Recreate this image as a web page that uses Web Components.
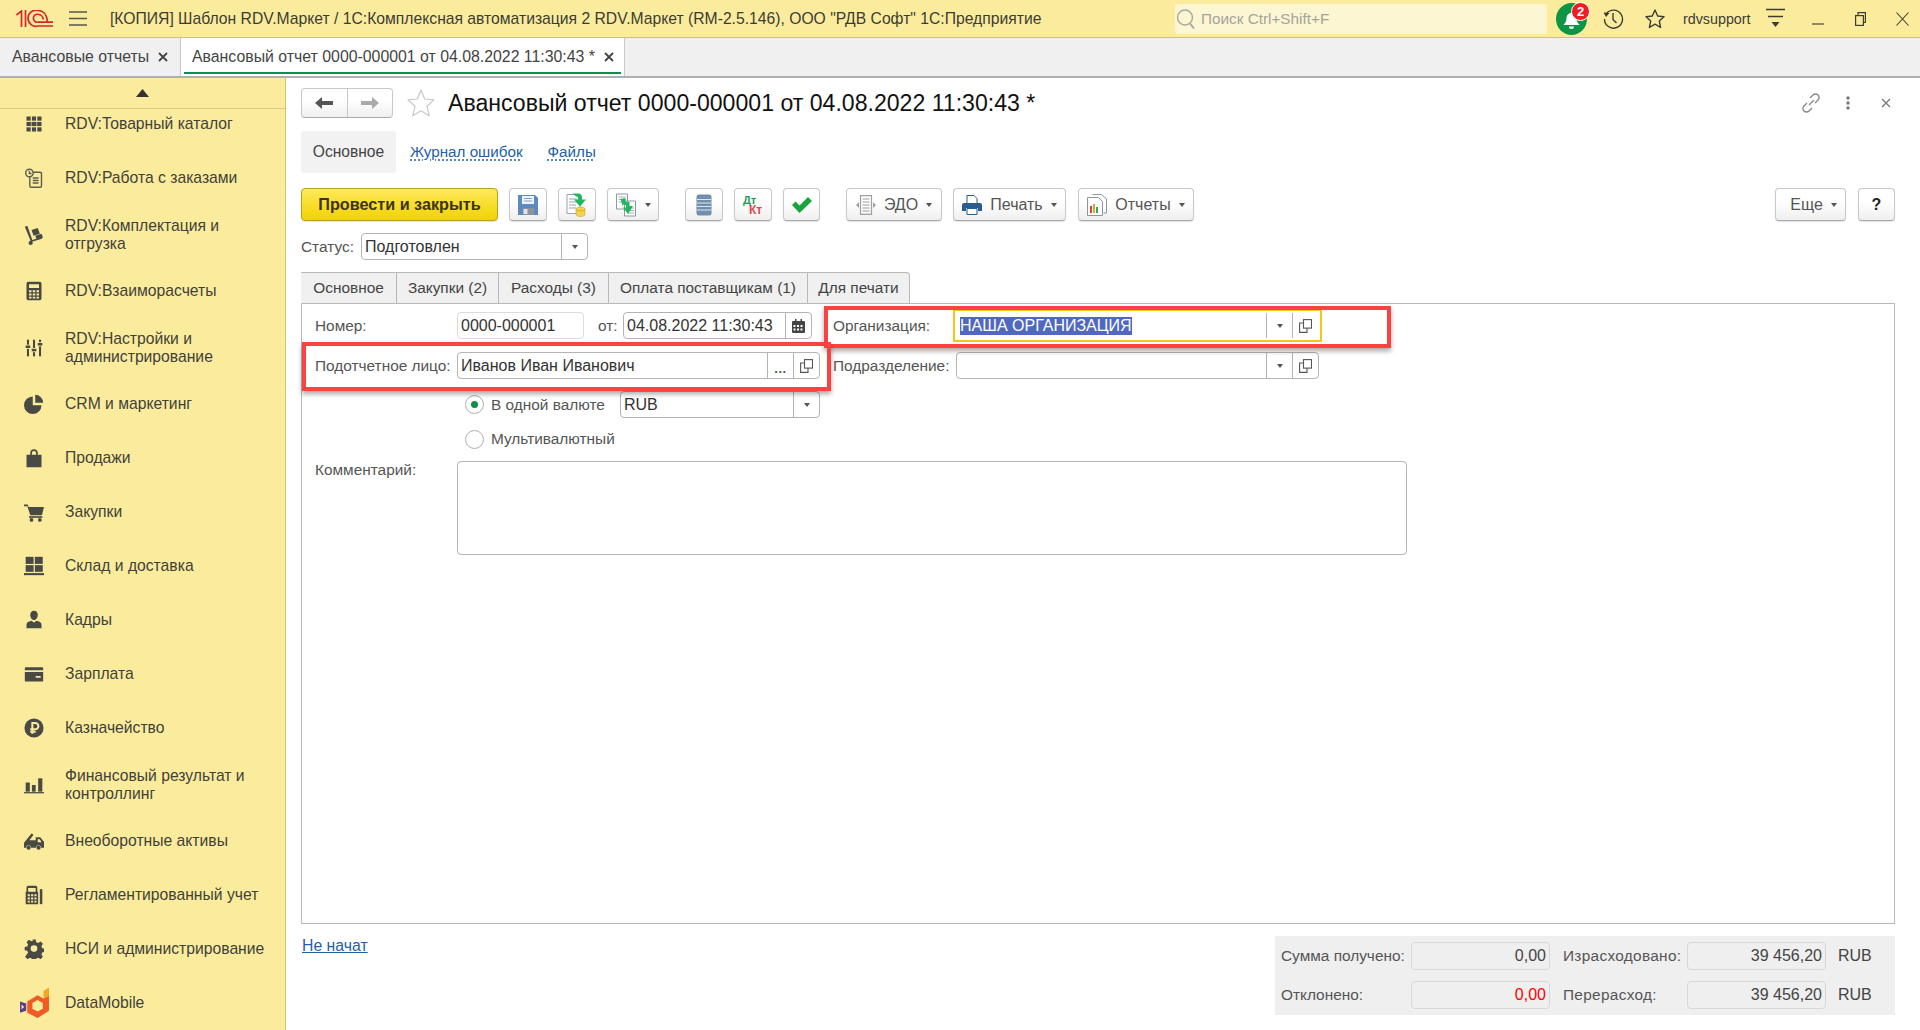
<!DOCTYPE html>
<html lang="ru">
<head>
<meta charset="utf-8">
<title>Авансовый отчет</title>
<style>
  html, body { margin: 0; height: 100%; overflow: hidden; background: #fff; }
  body { font: 15.4px "Liberation Sans", Arial, sans-serif; color: #333; }
</style>
</head>
<body>
<app-shell>
  <top-bar slot="top"></top-bar>
  <open-tabs slot="tabs"></open-tabs>
  <side-panel slot="side">
    <side-item icon="catalog">RDV:Товарный каталог</side-item>
    <side-item icon="orders">RDV:Работа с заказами</side-item>
    <side-item icon="cart2">RDV:Комплектация и отгрузка</side-item>
    <side-item icon="calc">RDV:Взаиморасчеты</side-item>
    <side-item icon="sliders">RDV:Настройки и администрирование</side-item>
    <side-item icon="pie">CRM и маркетинг</side-item>
    <side-item icon="bag">Продажи</side-item>
    <side-item icon="cart">Закупки</side-item>
    <side-item icon="stock">Склад и доставка</side-item>
    <side-item icon="person">Кадры</side-item>
    <side-item icon="card">Зарплата</side-item>
    <side-item icon="ruble">Казначейство</side-item>
    <side-item icon="bars">Финансовый результат и контроллинг</side-item>
    <side-item icon="truck">Внеоборотные активы</side-item>
    <side-item icon="till">Регламентированный учет</side-item>
    <side-item icon="gear">НСИ и администрирование</side-item>
    <side-item icon="dm">DataMobile</side-item>
  </side-panel>
  <form-page slot="main"></form-page>
</app-shell>
<red-box style="left:824px;top:306px;width:567px;height:42px"></red-box>
<red-box style="left:302px;top:342px;width:529px;height:49px"></red-box>

<script>
const svg = (w, h, vb, body) =>
  `<svg xmlns="http://www.w3.org/2000/svg" width="${w}" height="${h}" viewBox="${vb}" style="display:block;flex:none">${body}</svg>`;

// sidebar icons, all on a 24 box
const sideIcons = {
  catalog: `<g fill="#4a4a44"><rect x="3" y="3" width="5" height="5"/><rect x="9.500" y="3" width="5" height="5"/><rect x="16" y="3" width="5" height="5"/><rect x="3" y="9.500" width="18" height="5"/><rect x="3" y="16" width="5" height="5"/><rect x="9.500" y="16" width="5" height="5"/><rect x="16" y="16" width="5" height="5"/></g><path d="M8.700 9v6M15.300 9v6" stroke="#fbec9d" stroke-width=".8"/>`,
  orders: `<g fill="none" stroke="#5d5d50" stroke-width="1.700"><rect x="7" y="5" width="14" height="18" rx="1.500"/><circle cx="6.500" cy="6" r="4.500" fill="#fbec9d"/><path d="M6.500 3.500V6.500h2.500M10.500 12h7M10.500 15h7M10.500 18h7"/></g>`,
  cart2: `<g fill="#4a4a44"><path d="M1 2l3-1 6 17 11-3.500 .5 2-13 4z"/><circle cx="8" cy="21.500" r="2.500"/><path d="M9 6l7.500-2.500 2.500 7-7.500 2.500zM13.500 13l7.500-2.500 1.800 4.500-7.500 2.500z"/></g>`,
  calc: `<path fill="#4a4a44" fill-rule="evenodd" d="M5 1h14a2 2 0 012 2v18a2 2 0 01-2 2H5a2 2 0 01-2-2V3a2 2 0 012-2zm1 3v4.500h12V4zm0 7v2.500h3V11zm4.500 0v2.500h3V11zm4.500 0v2.500h3V11zM6 15v2.500h3V15zm4.500 0v2.500h3V15zm4.500 0v2.500h3V15zM6 19v2h3v-2zm4.500 0v2h3v-2zm4.500 0v2h3v-2z"/>`,
  sliders: `<g fill="#4a4a44"><rect x="3.500" y="2" width="2.500" height="6"/><rect x="2" y="9" width="5.500" height="3"/><rect x="3.500" y="13" width="2.500" height="9"/><rect x="10.750" y="2" width="2.500" height="10"/><rect x="9.250" y="13" width="5.500" height="3"/><rect x="10.750" y="17" width="2.500" height="5"/><rect x="18" y="2" width="2.500" height="3"/><rect x="16.500" y="6" width="5.500" height="3"/><rect x="18" y="10" width="2.500" height="12"/></g>`,
  pie: `<path fill="#4a4a44" d="M10.500 3v10.500H21A10.500 10.500 0 1110.500 3zM13.500 1A9.500 9.500 0 0123 10.500h-9.500z"/>`,
  bag: `<path fill="#4a4a44" d="M3 8h4.500V6a4.500 4.500 0 019 0v2H21v15H3zm6.500 0h5V6a2.500 2.500 0 00-5 0z"/>`,
  cart: `<g fill="#4a4a44"><path d="M0 3h4.500l1 3H24l-2.500 10H7.500L4 5H0z"/><rect x="6" y="17" width="16" height="2"/><circle cx="9" cy="21.500" r="2.300"/><circle cx="19" cy="21.500" r="2.300"/></g>`,
  stock: `<g fill="#4a4a44"><rect x="2" y="1" width="9.500" height="8.500"/><rect x="13" y="1" width="9.500" height="8.500"/><rect x="2" y="11" width="9.500" height="8"/><rect x="13" y="11" width="9.500" height="8"/><rect x="0" y="20.500" width="24" height="2.500"/></g>`,
  person: `<path fill="#4a4a44" d="M12 1c3 0 4.500 2.300 4.500 5S15 12 12 12 7.500 8.700 7.500 6 9 1 12 1zM9 13l3 2 3-2c3 .500 6 2 6 4.500V22H3v-4.500c0-2.500 3-4 6-4.500z"/>`,
  card: `<path fill="#4a4a44" d="M2 4h20a1 1 0 011 1v2.500H1V5a1 1 0 011-1zM1 9.500h22V20a1 1 0 01-1 1H2a1 1 0 01-1-1zm13 5v2h6v-2z"/>`,
  ruble: `<circle cx="12" cy="12" r="11.500" fill="#4a4a44"/><path fill="none" stroke="#fbec9d" stroke-width="2.400" d="M10 19V6h3.500a3.500 3.500 0 010 7.500H7.500M7.500 16.500H14"/>`,
  bars: `<g fill="#4a4a44"><rect x="2" y="9" width="5" height="11"/><rect x="9.500" y="12" width="4.500" height="8"/><rect x="17" y="4" width="5" height="16"/><rect x="0" y="20.500" width="24" height="1.500"/></g>`,
  truck: `<path fill="#4a4a44" fill-rule="evenodd" d="M0 14L9 3l2.500 1.500-5 6.500H14V7.500h5.500L24 13v7h-3.500a3 3 0 00-6 0H8.500a3 3 0 00-6 0H0zm16.500-4v3.500h4.500L19 10z"/><circle cx="5.500" cy="20" r="2.500" fill="#4a4a44"/><circle cx="17.500" cy="20" r="2.500" fill="#4a4a44"/>`,
  till: `<path fill="#4a4a44" fill-rule="evenodd" d="M5 1h9a2 2 0 012 2v5h1v15H2V8h1V3a2 2 0 012-2zm0 2.500V8h9V3.500zM4.500 11v2.500h2.500V11zm4 0v2.500H11V11zm4 0v2.500H15V11zM4.500 15v2.500h2.500V15zm4 0v2.500H11V15zm4 0v2.500H15V15zM4.500 19v2h2.500v-2zm4 0v2H11v-2zm4 0v2H15v-2z"/><rect x="19" y="5" width="3" height="18" fill="#4a4a44"/>`,
  gear: `<path fill="#4a4a44" fill-rule="evenodd" d="M10 1h4l.7 3.300 2.300 1 2.900-1.800 2.800 2.800-1.800 2.900 1 2.300 3.100.5v4l-3.100.7-1 2.300 1.800 2.900-2.800 2.800-2.900-1.800-2.300 1-.7 3.100h-4l-.7-3.100-2.300-1-2.900 1.800-2.800-2.800L4.900 17l-1-2.300L.8 14v-4l3.100-.5 1-2.300-1.800-2.900 2.800-2.800 2.900 1.800 2.300-1zM12 8a4 4 0 100 8 4 4 0 000-8z" transform="translate(0 -.500)"/>`,
  dm: `<path fill="#ef5a25" d="M28 0v22l-11 7-10-5V13l10-6 6 3.500V3z"/><path fill="#f5a623" d="M23 3l5-3v8l-5 2.500z"/><path fill="#fbec9d" d="M12 14.500l5-2.800 5 2.800v5.500l-5 2.800-5-2.800z"/><path fill="#5a3f8f" d="M0 13l6 2v7l-6 2z"/><path fill="#fbec9d" d="M1.500 16l2.500 2.300-2.500 2.300z"/>`
};

class AppShell extends HTMLElement {
  constructor() {
    super();
    this.shadowDOM = this.attachShadow({ mode: "open" });
    this.shadowDOM.innerHTML = `
    <style>
      :host { display: flex; flex-direction: column; height: 1030px; overflow: hidden; }
      .body { flex: 1; display: flex; min-height: 0; }
    </style>
    <slot name="top"></slot>
    <slot name="tabs"></slot>
    <div class="body"><slot name="side"></slot><slot name="main"></slot></div>`;
  }
}

class TopBar extends HTMLElement {
  constructor() {
    super();
    this.shadowDOM = this.attachShadow({ mode: "open" });
    this.shadowDOM.innerHTML = `
    <style>
      :host { display: flex; align-items: center; height: 37px; box-sizing: content-box; background: #fbec9d; border-bottom: 1px solid #d3c274; color: #3c3c34; position: relative; }
      .logo { margin-left: 16px; }
      .burger { margin-left: 16px; }
      .title { margin-left: 23px; font-size: 15.7px; white-space: nowrap; width: 1065px; flex: none; }
      .search { width: 372px; height: 30px; background: #fdf6d3; border-radius: 3px; display: flex; align-items: center; gap: 5px; padding-left: 1px; box-sizing: border-box; color: #a5a499; flex: none; font-size: 15.3px; }
      .bell { position: relative; margin-left: 9px; width: 31px; height: 32px; flex: none; }
      .badge { position: absolute; left: 15px; top: -1px; width: 19px; height: 19px; line-height: 17px; box-sizing: border-box; border: 1px solid #fff; background: #ee1c25; border-radius: 50%; color: #fff; font-weight: bold; font-size: 13px; text-align: center; }
      .hist { margin-left: 15px; }
      .fav { margin-left: 20px; }
      .user { margin-left: 17px; width: 76px; flex: none; font-size: 14.3px; }
      .ctl { margin-left: 7px; }
      .min { margin-left: 27px; }
      .rest { margin-left: 31px; }
      .close { margin-left: 30px; }
    </style>
    <span class="logo">${svg(37, 18, "16 10 37 18", `<g fill="none" stroke="#d7262b" stroke-width="1.700"><path d="M16.500 15L21.500 11V27M25.500 10V27"/><path d="M53 26H38A8 8 0 1 1 38 10.500C43.500 10.500 47 15 47.500 22"/><path d="M53 22.200H38A4 4 0 1 1 38 14.300C41 14.300 43 17 43.300 19.500"/></g>`)}</span>
    <span class="burger">${svg(18, 15, "0 0 18 15", `<g stroke="#56564e" stroke-width="1.300"><path d="M0 1h18M0 7.500h18M0 14h18"/></g>`)}</span>
    <span class="title">[КОПИЯ] Шаблон RDV.Маркет / 1С:Комплексная автоматизация 2 RDV.Маркет (RM-2.5.146), ООО "РДВ Софт" 1С:Предприятие</span>
    <div class="search">
      ${svg(20, 22, "0 0 20 22", `<g fill="none" stroke="#a8a89c" stroke-width="1.400"><circle cx="9" cy="9.500" r="7.500"/><path d="M14 15.500l4 5" stroke-width="2"/></g>`)}
      <span>Поиск Ctrl+Shift+F</span>
    </div>
    <div class="bell">
      ${svg(31, 32, "0 0 31 32", `<ellipse cx="15.500" cy="16" rx="15.500" ry="16" fill="#0c9447"/><path fill="#fff" d="M15.500 10c3.500 0 5 2.500 5 5.500 0 3 1.500 4.500 3 6.500H7.500c1.500-2 3-3.500 3-6.500 0-3 1.500-5.500 5-5.500zM13 23.500h5a2.500 2.500 0 01-5 0z"/>`)}
      <span class="badge">2</span>
    </div>
    <span class="hist">${svg(22, 22, "0 0 22 22", `<g fill="none" stroke="#3c3c34" stroke-width="1.400"><path d="M4.500 5.500A9 9 0 1 1 2.500 11"/><path d="M11 5v6.500l3.500 3.500"/></g><path d="M1.500 4.500l6 .500-3.500 4z" fill="#3c3c34"/>`)}</span>
    <span class="fav">${svg(22, 22, "0 0 22 22", `<path fill="none" stroke="#3c3c34" stroke-width="1.400" stroke-linejoin="round" d="M11 2l2.700 6 6.300.7-4.700 4.300 1.300 6.500-5.600-3.300-5.600 3.300L6.700 13 2 8.700 8.300 8z"/>`)}</span>
    <span class="user">rdvsupport</span>
    <span class="ctl">${svg(19, 21, "0 0 19 21", `<path stroke="#3c3c34" stroke-width="1.300" d="M0 1.500h19M2 8.500h15"/><path fill="#3c3c34" d="M5.500 14h8l-4 5z"/>`)}</span>
    <span class="min">${svg(12, 12, "0 0 12 12", `<path stroke="#56564e" stroke-width="1.300" d="M0 11h12"/>`)}</span>
    <span class="rest">${svg(11, 14, "0 0 11 14", `<g fill="none" stroke="#3c3c34" stroke-width="1.200"><rect x=".6" y="3.600" width="7.800" height="9.800"/><path d="M3 3.500V.6h7.400V10.500H8.500"/></g>`)}</span>
    <span class="close">${svg(13, 14, "0 0 13 14", `<path stroke="#3c3c34" stroke-width="1.100" fill="none" d="M.5.500l12 13M12.500.500L.5 13.500"/>`)}</span>`;
  }
}

class OpenTabs extends HTMLElement {
  constructor() {
    super();
    this.shadowDOM = this.attachShadow({ mode: "open" });
    this.shadowDOM.innerHTML = `
    <style>
      :host { display: flex; height: 38px; background: #f0f0f0; border-bottom: 2px solid #b0b0b0; box-sizing: content-box; color: #444; font-size: 15.85px; }
      .tab { display: flex; align-items: center; white-space: nowrap; box-sizing: border-box; }
      .a { width: 181px; padding-left: 12px; border-right: 1px solid #c9c9c9; }
      .a .x { margin-left: 9px; }
      .b { width: 444px; padding-left: 11px; background: #fff; border-right: 1px solid #c9c9c9; position: relative; }
      .b .x { margin-left: 9px; }
      .b::after { content: ""; position: absolute; left: 3px; right: 3px; bottom: 2px; height: 2px; background: #0c8f48; }
      .x { font-size: 0; }
    </style>
    <div class="tab a"><span>Авансовые отчеты</span><span class="x">${svg(10, 10, "0 0 10 10", `<path stroke="#444" stroke-width="1.800" d="M1 1l8 8M9 1L1 9"/>`)}</span></div>
    <div class="tab b"><span>Авансовый отчет 0000-000001 от 04.08.2022 11:30:43 *</span><span class="x">${svg(10, 10, "0 0 10 10", `<path stroke="#444" stroke-width="1.800" d="M1 1l8 8M9 1L1 9"/>`)}</span></div>`;
  }
}

class SidePanel extends HTMLElement {
  constructor() {
    super();
    this.shadowDOM = this.attachShadow({ mode: "open" });
    this.shadowDOM.innerHTML = `
    <style>
      :host { display: flex; flex-direction: column; flex: none; width: 286px; box-sizing: border-box; background: #fbec9d; border-right: 1px solid #d3c274; overflow: hidden; }
      .up { flex: none; height: 31px; border-bottom: 1px solid #d8cb86; box-sizing: border-box; display: flex; justify-content: center; align-items: center; }
      .list { flex: 1; overflow: hidden; }
      .inner { margin-top: -12px; }
    </style>
    <div class="up">${svg(13, 8, "0 0 13 8", `<path fill="#333" d="M6.500 0L13 8H0z"/>`)}</div>
    <div class="list"><div class="inner"><slot></slot></div></div>`;
  }
}

class SideItem extends HTMLElement {
  constructor() {
    super();
    this.shadowDOM = this.attachShadow({ mode: "open" });
  }
  connectedCallback() {
    const name = this.getAttribute("icon");
    const big = name === "dm";
    this.shadowDOM.innerHTML = `
    <style>
      :host { display: flex; align-items: center; min-height: 54px; box-sizing: border-box; padding: 11.5px 10px 11.5px 22px; color: #414139; line-height: 18px; font-size: 15.7px; }
      .ic { width: 24px; height: 24px; flex: none; margin-right: 19px; display: flex; align-items: center; justify-content: center; }
    </style>
    <span class="ic">${big ? svg(29, 30, "0 0 28 29", sideIcons[name]) : svg(20, 20, "0 0 24 24", sideIcons[name])}</span>
    <span><slot></slot></span>`;
  }
}

const toolIcons = {
  save: svg(22, 22, "0 0 22 22", `<path fill="#5f88bd" d="M1 1h17l3 3v17H1z"/><rect x="5" y="2" width="12" height="8" fill="#eef3fa"/><path stroke="#7fa2cc" d="M7 4.500h8M7 7h8"/><rect x="6" y="14" width="11" height="7" fill="#8a939e"/><rect x="6.500" y="15" width="4" height="5" fill="#dfe3e8"/>`),
  post: svg(24, 24, "0 0 24 24", `<path fill="#fff" stroke="#9aa3ad" d="M2 1.500h13l0 19H2z"/><path stroke="#9aa3ad" d="M4 6h8M4 9h8M4 12h7M4 15h7"/><ellipse cx="15.500" cy="16" rx="4.500" ry="2" fill="#f5d34a" stroke="#c9a520" stroke-width=".6"/><path fill="#f5d34a" stroke="#c9a520" stroke-width=".6" d="M11 16v5.500c0 1.100 2 2 4.500 2s4.500-.9 4.500-2V16c0 1.100-2 2-4.500 2S11 17.100 11 16z"/><path fill="#1fb860" d="M8 .500h5c3 0 4 2 4 4v2h4l-6 7-6-7h4V5c0-1-1-1.500-2-1.500z"/>`),
  copy: svg(22, 24, "0 0 22 24", `<path fill="#fff" stroke="#8d96a0" d="M1.500 1h11v15h-11z"/><path stroke="#aab2bb" d="M3.500 4h7M3.500 6.500h7M3.500 9h5"/><path fill="#fff" stroke="#8d96a0" d="M9.500 8h11v15h-11z"/><path stroke="#aab2bb" d="M13 15h6M13 17.500h6M13 20h6"/><path fill="#1fb860" d="M5.500 6l5-1v3.500l4 .5v4h3.500l-5 8-5-6.500h3V12L8 11.500V14z"/>`),
  list: svg(16, 22, "0 0 16 22", `<rect x=".5" y=".5" width="15" height="21" rx="2.500" fill="#6f8fac"/><path stroke="#dbe5ee" stroke-width="1.200" d="M1 5.500h14M1 9h14M1 12.500h14M1 16h14"/>`),
  dtkt: svg(26, 22, "0 0 26 22", `<text x="3" y="10" font-family="Liberation Sans, Arial, sans-serif" font-size="11" font-weight="bold" fill="#1e9c55">Дт</text><text x="9" y="20" font-family="Liberation Sans, Arial, sans-serif" font-size="12" font-weight="bold" fill="#e2474b">Кт</text>`),
  check: svg(20, 16, "0 0 20 16", `<path fill="#1ba33f" d="M0 8l3.500-3.500L7.500 8.500 16 0l4 4L7.500 16z"/>`),
  edo: svg(20, 20, "0 0 20 20", `<g fill="none" stroke="#a0a0a0" stroke-width="1.200"><path d="M4.500 .6h11v18.800h-11zM6.500 4h7M6.500 7h7M6.500 10h7M6.500 13h7M6.500 16h7"/></g><path fill="#a0a0a0" d="M0 10l3-3v6zM20 10l-3-3v6z"/>`),
  print: svg(20, 20, "0 0 20 20", `<path fill="#fff" stroke="#2c5b8d" d="M5 .5h7l3 3v6H5z"/><path fill="#2c5b8d" d="M2 8h16a2 2 0 012 2v6h-4v-3H4v3H0v-6a2 2 0 012-2z"/><path fill="#fff" stroke="#2c5b8d" d="M5 13.500h10v6H5z"/>`),
  rep: svg(20, 22, "0 0 20 22", `<path fill="#fff" stroke="#8c949c" d="M5.500.5h9l5 4.500v14h-3"/><path fill="#fff" stroke="#8c949c" d="M.5 3.500h11l4 4v14H.5z"/><rect x="3" y="12" width="2" height="7" fill="#d9423b"/><rect x="6" y="10" width="2" height="9" fill="#c9b030"/><rect x="9" y="13" width="2" height="6" fill="#3aa655"/>`),
};

class ToolButton extends HTMLElement {
  constructor() {
    super();
    this.shadowDOM = this.attachShadow({ mode: "open" });
  }
  connectedCallback() {
    const icon = this.getAttribute("icon");
    const menu = this.hasAttribute("menu");
    this.shadowDOM.innerHTML = `
    <style>
      :host { display: flex; align-items: center; justify-content: center; flex: none; height: 33px; box-sizing: border-box; background: linear-gradient(#fff 40%, #efefef); border: 1px solid #c8c8c8; border-bottom-color: #a9a9a9; border-radius: 4px; box-shadow: 0 1px 1px rgba(0,0,0,.12); color: #555; gap: 8px; font-size: 16px; }
      :host([primary]) { background: linear-gradient(#ffe95c, #f1d300); border-color: #b8a21a; color: #3c3412; font-weight: bold; font-size: 16.2px; }
      .caret { width: 0; height: 0; border: 3px solid transparent; border-top: 4px solid #555; border-bottom: 0; }
      :host([dark]) { color: #222; font-weight: bold; }
    </style>
    ${icon ? toolIcons[icon] : ""}<slot></slot>${menu ? '<span class="caret"></span>' : ""}`;
  }
}

class FieldBox extends HTMLElement {
  constructor() {
    super();
    this.shadowDOM = this.attachShadow({ mode: "open" });
  }
  connectedCallback() {
    const parts = (this.getAttribute("parts") || "").split(" ").filter(Boolean);
    const icons = {
      drop: `<span class="caret"></span>`,
      dots: `<b class="dots">...</b>`,
      open: svg(13, 14, "0 0 13 14", `<g fill="none" stroke="#555" stroke-width="1.100"><rect x="4.500" y=".6" width="8" height="8.500" fill="#fff"/><path d="M4.500 4H.6v9.400H8V9"/></g>`),
      cal: svg(13, 14, "0 0 13 14", `<path fill="#444" fill-rule="evenodd" d="M1 2h2V0h1.500v2h4V0H10v2h2a1 1 0 011 1v10a1 1 0 01-1 1H1a1 1 0 01-1-1V3a1 1 0 011-1zm.5 4v2h2V6zm3.500 0v2h2V6zm3.500 0v2h2V6zM1.500 9.500v2h2v-2zm3.500 0v2h2v-2zm3.500 0v2h2v-2z"/>`)
    };
    this.shadowDOM.innerHTML = `
    <style>
      :host { display: flex; flex: none; height: 27px; box-sizing: border-box; border: 1px solid #b4b4b4; border-radius: 4px; background: #fff; color: #333; align-items: stretch; font-size: 16px; }
      :host([pale]) { border-color: #dcdcdc; }
      :host([focused]) { border-color: transparent; border-radius: 0; outline: 2px solid #f6c515; outline-offset: 1px; }
      .val { flex: 1; padding-left: 3px; display: flex; align-items: center; white-space: nowrap; overflow: hidden; min-width: 0; }
      .btn { flex: none; width: 25px; border-left: 1px solid #b4b4b4; display: flex; align-items: center; justify-content: center; }
      .caret { width: 0; height: 0; border: 3.5px solid transparent; border-top: 4px solid #555; border-bottom: 0; }
      .dots { font-weight: bold; font-size: 13px; color: #555; margin-top: 6px; letter-spacing: .5px; }
      ::slotted(mark) { background: #5068c0; color: #fff; }
    </style>
    <div class="val"><slot></slot></div>
    ${parts.map((p) => `<span class="btn">${icons[p]}</span>`).join("")}`;
  }
}

class RadioItem extends HTMLElement {
  constructor() {
    super();
    this.shadowDOM = this.attachShadow({ mode: "open" });
    this.shadowDOM.innerHTML = `
    <style>
      :host { display: flex; align-items: center; gap: 7px; color: #555; height: 26px; white-space: nowrap; }
      .dot { width: 19px; height: 19px; box-sizing: border-box; border: 1px solid #b0b0b0; border-radius: 50%; background: #fff; display: flex; align-items: center; justify-content: center; flex: none; }
      :host([on]) .dot::after { content: ""; width: 7px; height: 7px; border-radius: 50%; background: #0c8f48; }
    </style>
    <span class="dot"></span><slot></slot>`;
  }
}

class FormTabs extends HTMLElement {
  constructor() {
    super();
    this.shadowDOM = this.attachShadow({ mode: "open" });
    const tabs = [["Основное", 96], ["Закупки (2)", 102], ["Расходы (3)", 110], ["Оплата поставщикам (1)", 199], ["Для печати", 102]];
    this.shadowDOM.innerHTML = `
    <style>
      :host { display: flex; height: 31px; flex: none; position: relative; z-index: 1; }
      .t { box-sizing: border-box; height: 31px; background: #f0f0f0; border: 1px solid #b8b8b8; border-left: 0; border-bottom: 0; color: #444; display: flex; align-items: center; justify-content: center; white-space: nowrap; }
      .t:first-child { background: #fff; border-left: 1px solid #b8b8b8; border-radius: 4px 0 0 0; height: 32px; padding-bottom: 1px; }
      .t:last-child { border-radius: 0 4px 0 0; }
    </style>
    ${tabs.map(([name, w]) => `<div class="t" style="width:${w}px">${name}</div>`).join("")}`;
  }
}

class TotalsPanel extends HTMLElement {
  constructor() {
    super();
    this.shadowDOM = this.attachShadow({ mode: "open" });
    const sum = (v, red) => `<div class="sum${red ? " red" : ""}">${v}</div>`;
    this.shadowDOM.innerHTML = `
    <style>
      :host { display: grid; flex: none; width: 620px; height: 79px; box-sizing: border-box; background: #efefef; padding: 6px 0 0 6px; grid-template-columns: 130px 139px 137px 139px auto; grid-auto-rows: 28px; row-gap: 11px; color: #555; align-items: center; }
      .gap { padding-left: 13px; white-space: nowrap; letter-spacing: .3px; }
      .sum { height: 28px; box-sizing: border-box; border: 1px solid #d8d8d8; border-radius: 4px; text-align: right; padding-right: 3px; line-height: 26px; color: #444; font-size: 16px; }
      .red { color: #f00; }
      .cur { padding-left: 12px; color: #444; font-size: 16px; }
    </style>
    <div>Сумма получено:</div>${sum("0,00")}<div class="gap">Израсходовано:</div>${sum("39 456,20")}<div class="cur">RUB</div>
    <div>Отклонено:</div>${sum("0,00", true)}<div class="gap">Перерасход:</div>${sum("39 456,20")}<div class="cur">RUB</div>`;
  }
}

class FormPage extends HTMLElement {
  constructor() {
    super();
    this.shadowDOM = this.attachShadow({ mode: "open" });
    this.shadowDOM.innerHTML = `
    <style>
      :host { display: flex; flex-direction: column; flex: 1; min-width: 0; box-sizing: border-box; padding: 10px 25px 0 15px; background: #fff; }
      .head { display: flex; align-items: center; height: 30px; flex: none; }
      .nav { display: flex; width: 92px; height: 30px; box-sizing: border-box; border: 1px solid #c8c8c8; border-bottom-color: #a9a9a9; border-radius: 4px; background: linear-gradient(#fff 40%, #efefef); flex: none; }
      .nav span { flex: 1; display: flex; align-items: center; justify-content: center; }
      .nav span + span { border-left: 1px solid #c8c8c8; }
      .star { margin-left: 13px; }
      h1 { margin: 0 0 0 12px; font-weight: normal; font-size: 23.1px; color: #111; white-space: nowrap; }
      .tools { margin-left: auto; display: flex; align-items: center; padding-right: 4px; }
      .links { display: flex; align-items: center; height: 42px; margin-top: 13px; flex: none; font-size: 15.2px; }
      .links b { font-weight: normal; background: #f2f2f2; border-radius: 3px; height: 42px; width: 95px; display: flex; align-items: center; justify-content: center; color: #444; font-size: 15.6px; }
      .links a { color: #1f5fa8; text-decoration: underline dotted; text-underline-offset: 3px; margin-left: 14px; position: relative; top: -1px; }
      .links a + a { margin-left: 25px; }
      .bar { display: flex; gap: 11px; margin-top: 15px; flex: none; }
      .status { display: flex; align-items: center; margin-top: 12px; color: #555; height: 27px; flex: none; }
      .status span { width: 60px; }
      .panel { position: relative; flex: none; height: 621px; box-sizing: border-box; border: 1px solid #b8b8b8; padding: 8px 0 0 13px; display: grid; grid-template-columns: 518px 1fr; grid-template-rows: 27px 27px 26px 26px auto; row-gap: 13px; }
      .row { display: flex; align-items: center; color: #555; }
      .row label { flex: none; white-space: nowrap; }
      .r3 { grid-column: 1; grid-row: 3; padding-left: 150px; margin-top: -1px; align-self: start; height: 27px; }
      .r4 { grid-column: 1; grid-row: 4; padding-left: 150px; margin-top: -5px; align-self: start; height: 26px; }
      .r5 { grid-column: 1 / 3; grid-row: 5; align-items: flex-start; margin-top: -9px; }
      .note { width: 950px; height: 94px; box-sizing: border-box; border: 1px solid #b4b4b4; border-radius: 4px; }
      .foot { display: flex; justify-content: space-between; margin-top: 12px; flex: none; }
      .foot a { color: #1f5fa8; text-decoration: underline; margin-top: 1px; height: 18px; padding-left: 1px; font-size: 15.8px; }
      .spacer { margin-left: auto; }
    </style>
    <div class="head">
      <div class="nav">
        <span>${svg(18, 14, "0 0 18 14", `<path fill="#555" d="M0 7l7-6v4h11v4H7v4z"/>`)}</span>
        <span>${svg(18, 14, "0 0 18 14", `<path fill="#aaa" d="M18 7l-7-6v4H0v4h11v4z"/>`)}</span>
      </div>
      <span class="star">${svg(30, 30, "0 0 30 30", `<path fill="#fff" stroke="#c8c8c8" stroke-width="1.200" stroke-linejoin="round" d="M15 2l3.700 9 9.300.9-7 6.300 2.200 9.500L15 22.700 6.800 27.700 9 18.200 2 11.900l9.300-.9z"/>`)}</span>
      <h1>Авансовый отчет 0000-000001 от 04.08.2022 11:30:43 *</h1>
      <div class="tools">
        ${svg(20, 20, "0 0 20 20", `<g fill="none" stroke="#8a8a8a" stroke-width="1.400"><path d="M8 12l5-5M9 5l3-3a3.500 3.500 0 015 5l-3 3M11 15l-3 3a3.500 3.500 0 01-5-5l3-3"/></g>`)}
        <span style="margin:0 31px 0 25px">${svg(4, 14, "0 0 4 14", `<g fill="#777"><circle cx="2" cy="2" r="1.700"/><circle cx="2" cy="7" r="1.700"/><circle cx="2" cy="12" r="1.700"/></g>`)}</span>
        ${svg(10, 10, "0 0 10 10", `<path stroke="#777" stroke-width="1.300" d="M1 1l8 8M9 1L1 9"/>`)}
      </div>
    </div>
    <div class="links"><b>Основное</b><a>Журнал ошибок</a><a>Файлы</a></div>
    <div class="bar">
      <tool-button primary style="width:197px">Провести и закрыть</tool-button>
      <tool-button icon="save" style="width:38px"></tool-button>
      <tool-button icon="post" style="width:38px"></tool-button>
      <tool-button icon="copy" menu style="width:52px"></tool-button>
      <tool-button icon="list" style="width:38px;margin-left:15px"></tool-button>
      <tool-button icon="dtkt" style="width:38px"></tool-button>
      <tool-button icon="check" style="width:37px"></tool-button>
      <tool-button icon="edo" menu style="width:96px;margin-left:15px">ЭДО</tool-button>
      <tool-button icon="print" menu style="width:113px">Печать</tool-button>
      <tool-button icon="rep" menu style="width:116px;margin-left:1px">Отчеты</tool-button>
      <tool-button menu class="spacer" style="width:71px;padding-left:6px">Еще</tool-button>
      <tool-button dark style="width:37px;margin-left:1px">?</tool-button>
    </div>
    <div class="status"><span>Статус:</span><field-box parts="drop" style="width:227px">Подготовлен</field-box></div>
    <form-tabs style="margin-top:12px"></form-tabs>
    <div class="panel">
      <div class="row">
        <label style="width:142px">Номер:</label>
        <field-box pale style="width:127px">0000-000001</field-box>
        <label style="margin-left:14px;width:25px">от:</label>
        <field-box parts="cal" style="width:189px">04.08.2022 11:30:43</field-box>
      </div>
      <div class="row">
        <label style="width:123px">Организация:</label>
        <field-box focused parts="drop open" style="width:363px"><mark>НАША ОРГАНИЗАЦИЯ</mark></field-box>
      </div>
      <div class="row">
        <label style="width:142px">Подотчетное лицо:</label>
        <field-box parts="dots open" style="width:363px">Иванов Иван Иванович</field-box>
      </div>
      <div class="row">
        <label style="width:123px">Подразделение:</label>
        <field-box parts="drop open" style="width:363px"></field-box>
      </div>
      <div class="row r3">
        <radio-item on style="width:155px">В одной валюте</radio-item>
        <field-box parts="drop" style="width:200px">RUB</field-box>
      </div>
      <div class="row r4"><radio-item>Мультивалютный</radio-item></div>
      <div class="row r5">
        <label style="width:142px">Комментарий:</label>
        <div class="note"></div>
      </div>
    </div>
    <div class="foot"><a>Не начат</a><totals-panel></totals-panel></div>`;
  }
}

class RedBox extends HTMLElement {
  constructor() {
    super();
    this.shadowDOM = this.attachShadow({ mode: "open" });
    this.shadowDOM.innerHTML = `
    <style>
      :host { position: absolute; display: block; box-sizing: border-box; border: 4px solid #fb4242; box-shadow: 0 3px 5px rgba(0,0,0,.35); pointer-events: none; }
    </style>`;
  }
}

customElements.define("app-shell", AppShell);
customElements.define("top-bar", TopBar);
customElements.define("open-tabs", OpenTabs);
customElements.define("side-panel", SidePanel);
customElements.define("side-item", SideItem);
customElements.define("tool-button", ToolButton);
customElements.define("field-box", FieldBox);
customElements.define("radio-item", RadioItem);
customElements.define("form-tabs", FormTabs);
customElements.define("totals-panel", TotalsPanel);
customElements.define("form-page", FormPage);
customElements.define("red-box", RedBox);
</script>
</body>
</html>
